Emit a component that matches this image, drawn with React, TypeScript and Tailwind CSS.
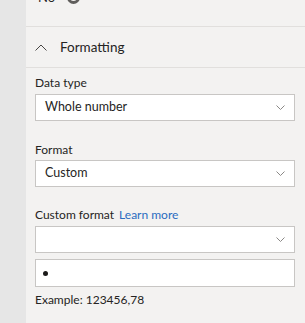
import React from 'react';

const ChevronDown = () => (
  <svg width="9" height="5" viewBox="0 0 9 5" fill="none" className="flex-shrink-0">
    <path d="M0.5 0.5 L4.5 4.5 L8.5 0.5" stroke="#8a8886" strokeWidth="1" />
  </svg>
);

const ChevronUp = () => (
  <svg width="12" height="7" viewBox="0 0 12 7" fill="none">
    <path d="M0.5 6.5 L6 1 L11.5 6.5" stroke="#484644" strokeWidth="1" />
  </svg>
);

const Select: React.FC<{ value?: string }> = ({ value }) => (
  <div className="h-[27px] bg-white border border-[#c8c6c4] flex items-center justify-between pl-[9px] pr-[9px]">
    <span className="text-[12.5px] text-[#252423]">{value}</span>
    <ChevronDown />
  </div>
);

const App: React.FC = () => {
  return (
    <div
      className="w-[305px] h-[323px] flex overflow-hidden bg-[#f3f2f1]"
      style={{ fontFamily: '"Segoe UI", Lato, "Noto Sans", sans-serif' }}
    >
      <div className="w-[26px] flex-shrink-0 bg-[#e6e6e6]" />
      <div className="flex-1 min-w-0 flex flex-col">
        <div className="h-[27px] border-b border-[#e1dfdd] flex items-start pl-[12px]">
          <div className="flex items-center -mt-[12px] gap-[12px]">
            <span className="text-[13px] text-[#252423]">No</span>
            <span className="w-[13px] h-[13px] rounded-full border-[3px] border-[#605e5c]" />
          </div>
        </div>
        <div className="h-[41px] border-b border-[#e1dfdd] flex items-center pl-[9px]">
          <ChevronUp />
          <span className="ml-[13px] text-[13.5px] text-[#252423]">Formatting</span>
        </div>
        <div className="pl-[9px] pr-[10px] pt-[5px] flex flex-col">
          <label className="text-[12px] text-[#252423] leading-[20px]">Data type</label>
          <div className="mt-[1px]">
            <Select value="Whole number" />
          </div>
          <label className="mt-[19px] text-[12px] text-[#252423] leading-[20px]">Format</label>
          <div className="mt-[0px]">
            <Select value="Custom" />
          </div>
          <div className="mt-[18px] text-[12px] leading-[20px] flex gap-[5px]">
            <span className="text-[#252423]">Custom format</span>
            <span className="text-[#2a6cc0]">Learn more</span>
          </div>
          <div className="mt-[1px]">
            <Select />
          </div>
          <div className="mt-[6px] h-[28px] bg-white border border-[#c8c6c4] flex items-center pl-[7px]">
            <span className="w-[5px] h-[5px] rounded-full bg-[#1b1a19]" />
          </div>
          <div className="mt-[3px] text-[12px] text-[#252423] leading-[20px]">Example: 123456,78</div>
        </div>
      </div>
    </div>
  );
};

export default App;
